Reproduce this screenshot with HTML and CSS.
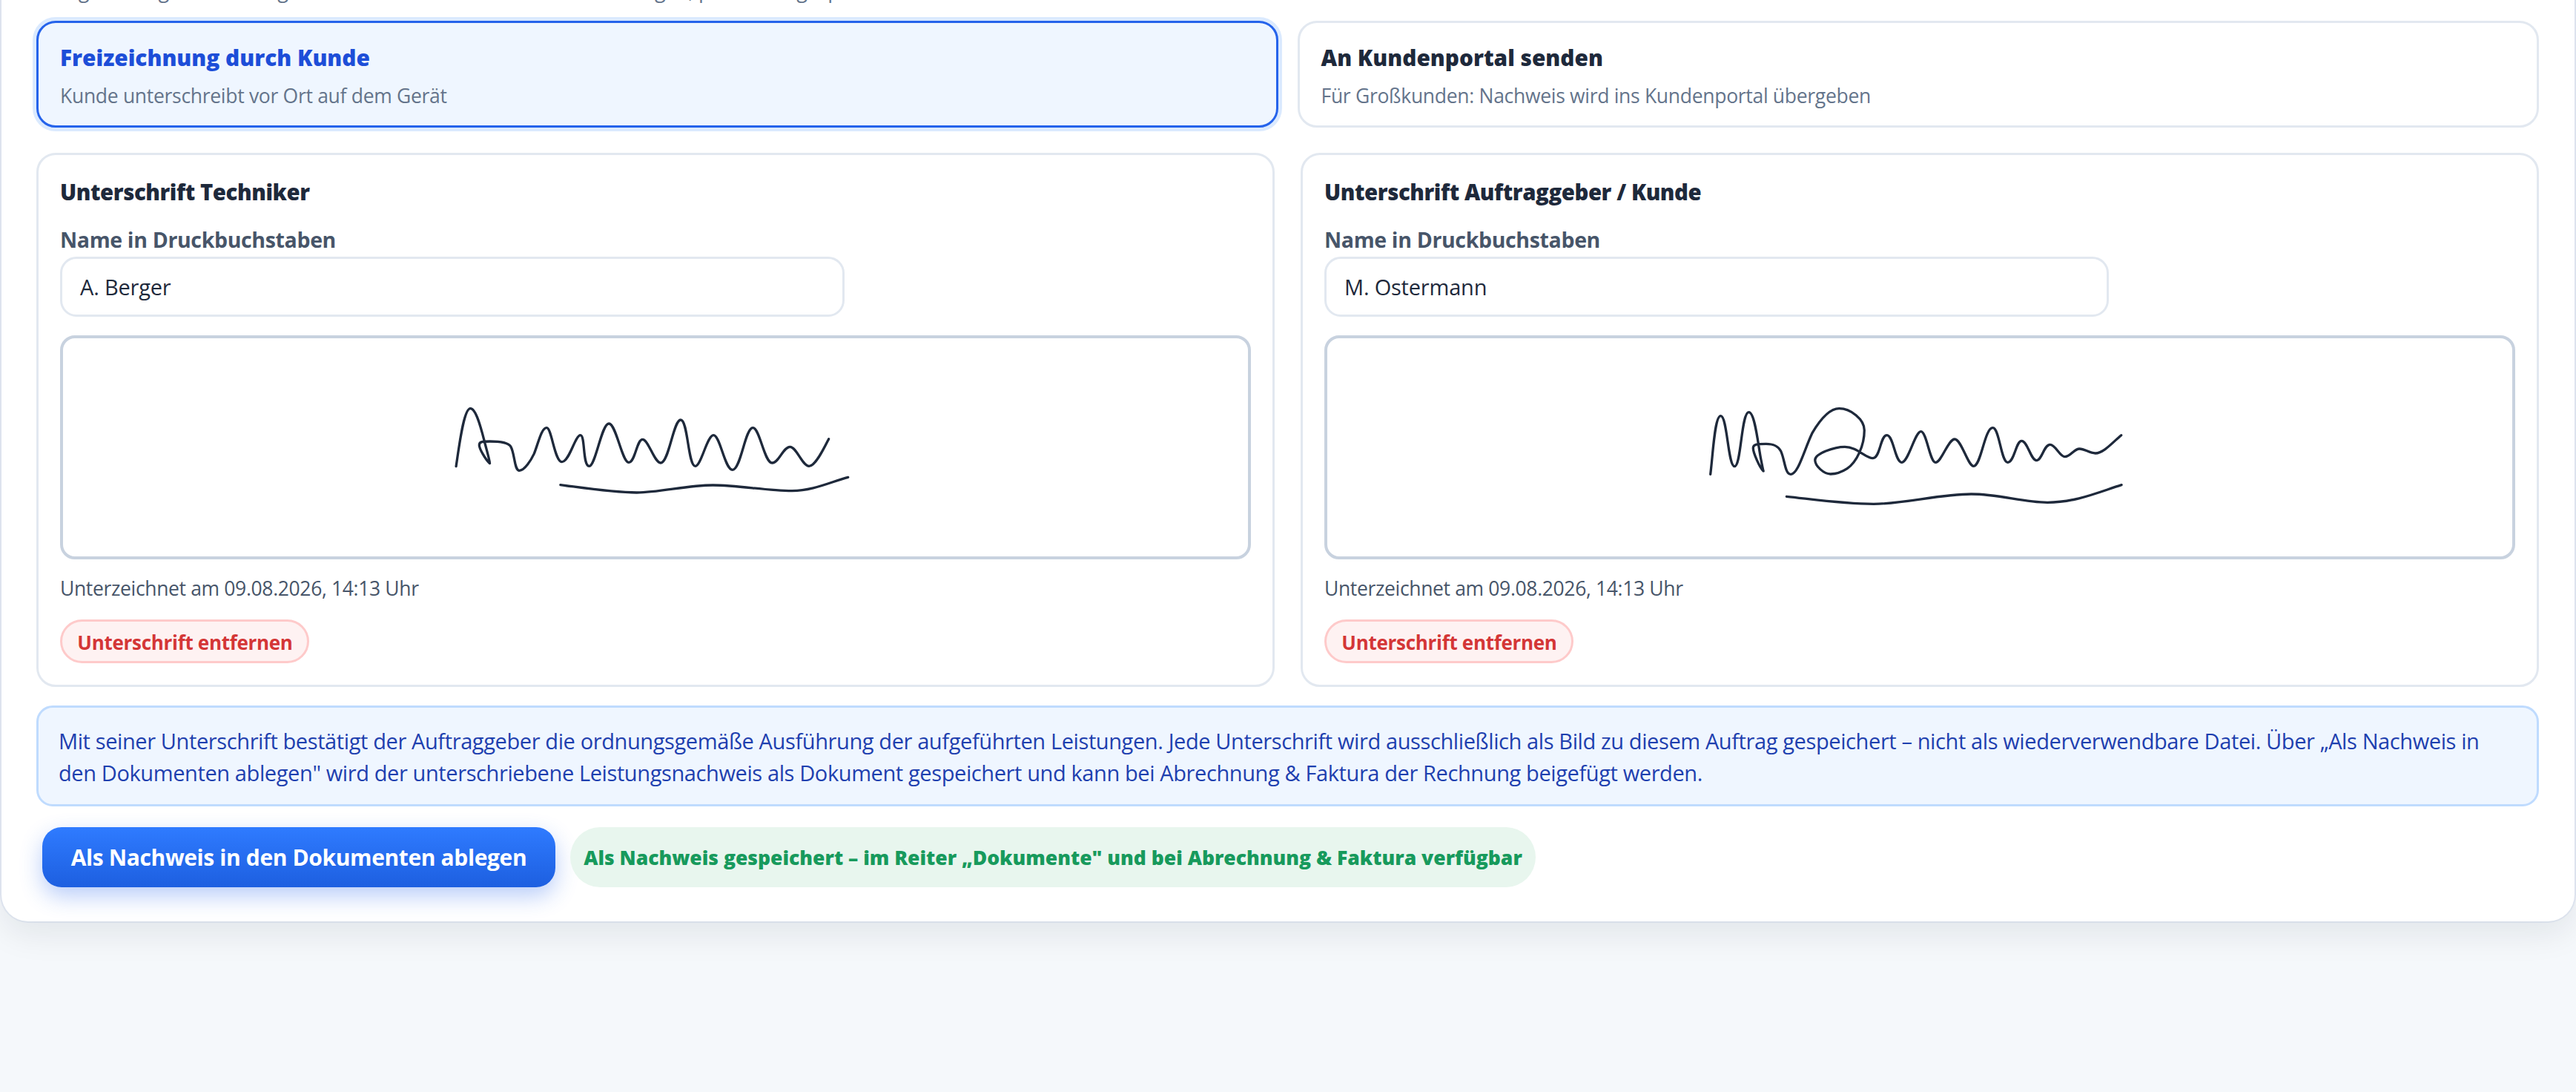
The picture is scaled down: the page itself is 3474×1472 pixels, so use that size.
FILE: index.html
```html
<!DOCTYPE html>
<html lang="de">
<head>
<meta charset="utf-8">
<title>Leistungsnachweis</title>
<link rel="stylesheet" href="styles.css">
</head>
<body>
<main class="panel">
  <p class="intro">Erfolgt die Abgabe vor Ort gemeinsam mit dem Kunden an den Anlagen, prüfen Sie gespeicherte Daten.</p>
  <div class="options">
    <div class="option option-active">
      <div class="option-title">Freizeichnung durch Kunde</div>
      <div class="option-sub">Kunde unterschreibt vor Ort auf dem Gerät</div>
    </div>
    <div class="option">
      <div class="option-title">An Kundenportal senden</div>
      <div class="option-sub">Für Großkunden: Nachweis wird ins Kundenportal übergeben</div>
    </div>
  </div>
  <div class="signatures">
    <section class="sig-card">
      <h3 class="sig-title">Unterschrift Techniker</h3>
      <label class="sig-label">Name in Druckbuchstaben</label>
      <div class="name-input">A. Berger</div>
      <div class="sig-pad">
        <svg class="sig-svg" viewBox="0 0 1598 294" aria-hidden="true">
          <g transform="translate(485 44) scale(0.3954 0.3333)">
            <path class="sig-stroke" d="M114,386 C125,300 140,152 163,152 C185,152 205,260 214,300 C222,335 228,360 229,374 C215,360 193,315 193,300 C193,285 205,285 230,285 C260,285 290,288 300,305 C315,335 312,403 330,403 C348,403 370,360 380,335 C395,290 405,230 423,230 C440,230 450,368 475,368 C500,368 520,260 538,260 C555,260 545,385 568,385 C590,385 610,213 635,213 C660,213 680,370 703,370 C725,370 730,277 750,277 C770,277 790,372 812,372 C840,372 855,198 880,198 C905,198 905,385 930,385 C950,385 970,260 992,260 C1015,260 1030,400 1057,400 C1085,400 1100,230 1126,230 C1150,230 1165,372 1192,372 C1215,372 1230,307 1253,307 C1275,307 1295,385 1318,385 C1340,385 1370,310 1385,275"/>
            <path class="sig-stroke" d="M470,461 C560,475 650,492 730,492 C810,492 900,462 990,462 C1080,462 1170,485 1260,485 C1330,485 1390,450 1451,430"/>
          </g>
        </svg>
      </div>
      <div class="sig-date">Unterzeichnet am 09.08.2026, 14:13 Uhr</div>
      <button class="remove-btn" type="button">Unterschrift entfernen</button>
    </section>
    <section class="sig-card">
      <h3 class="sig-title">Unterschrift Auftraggeber / Kunde</h3>
      <label class="sig-label">Name in Druckbuchstaben</label>
      <div class="name-input">M. Ostermann</div>
      <div class="sig-pad">
        <svg class="sig-svg" viewBox="0 0 1598 294" aria-hidden="true">
          <g transform="translate(460 44) scale(0.4464 0.3333)">
            <path class="sig-stroke" d="M127,418 C135,330 140,182 158,182 C178,182 180,386 200,386 C220,386 220,167 243,167 C262,167 272,310 280,360 C283,380 285,395 287,405 C275,390 256,330 256,312 C256,295 270,295 295,295 C320,295 332,305 340,325 C352,360 352,418 370,418 C392,418 410,320 435,250 C455,205 485,152 516,152 C550,152 592,195 592,240 C592,300 570,368 540,395 C525,408 505,417 490,417 C470,417 443,385 443,360 C443,335 500,307 533,307 C570,307 595,353 618,353 C640,353 640,260 660,260 C680,260 685,370 705,370 C725,370 745,245 763,245 C780,245 790,370 807,370 C825,370 845,276 865,276 C885,276 905,385 922,385 C945,385 955,230 980,230 C1000,230 1005,370 1025,370 C1045,370 1050,283 1067,283 C1085,283 1095,362 1112,362 C1128,362 1135,298 1153,298 C1170,298 1182,347 1198,347 C1215,347 1225,315 1242,315 C1258,315 1272,333 1290,333 C1315,333 1345,285 1368,260"/>
            <path class="sig-stroke" d="M357,508 C430,518 530,538 620,538 C710,538 820,498 915,498 C1000,498 1070,532 1145,532 C1230,532 1300,490 1369,461"/>
          </g>
        </svg>
      </div>
      <div class="sig-date">Unterzeichnet am 09.08.2026, 14:13 Uhr</div>
      <button class="remove-btn" type="button">Unterschrift entfernen</button>
    </section>
  </div>
  <div class="notice">Mit seiner Unterschrift bestätigt der Auftraggeber die ordnungsgemäße Ausführung der aufgeführten Leistungen. Jede Unterschrift wird ausschließlich als Bild zu diesem Auftrag gespeichert – nicht als wiederverwendbare Datei. Über „Als Nachweis in den Dokumenten ablegen" wird der unterschriebene Leistungsnachweis als Dokument gespeichert und kann bei Abrechnung &amp; Faktura der Rechnung beigefügt werden.</div>
  <div class="actions">
    <button class="save-btn" type="button">Als Nachweis in den Dokumenten ablegen</button>
    <div class="saved-pill">Als Nachweis gespeichert – im Reiter „Dokumente" und bei Abrechnung &amp; Faktura verfügbar</div>
  </div>
</main>
</body>
</html>
```
FILE: styles.css
```css
* { box-sizing: border-box; }
html, body { margin: 0; padding: 0; }
html { height: 100%; overflow: hidden; }
body {
  height: 100%;
  overflow: hidden;
  background: #f5f8fb;
  font-family: "Open Sans", "Noto Sans", sans-serif;
  color: #1e293b;
}
.panel {
  margin: -100px 2px 0;
  height: 1342px;
  padding: 70px 48px 0 47px;
  background: #fff;
  border-radius: 0 0 36px 36px;
  box-shadow: 0 18px 44px rgba(15, 23, 42, .08), 0 0 0 2px #e6ecf6;
}
.intro {
  margin: 0;
  height: 44px;
  line-height: 34px;
  font-size: 27px;
  letter-spacing: -.3px;
  color: #64748b;
  white-space: nowrap;
  overflow: hidden;
}
.options {
  display: grid;
  grid-template-columns: 1fr 1fr;
  gap: 26px;
  margin-top: 14px;
}
.option {
  height: 144px;
  padding: 27px 29px 0;
  border: 3px solid #e2e8f0;
  border-radius: 26px;
  background: #fff;
}
.option-active {
  background: #eff6ff;
  border-color: #2563eb;
  box-shadow: 0 0 0 5px #dbeafe;
}
.option-title {
  font-size: 29.8px;
  line-height: 40px;
  font-weight: 800;
  color: #1e293b;
}
.option-active .option-title { color: #1d4ed8; }
.option-sub {
  margin-top: 13px;
  font-size: 26.5px;
  line-height: 36px;
  letter-spacing: -.3px;
  color: #64748b;
}
.signatures {
  display: grid;
  grid-template-columns: 1fr 1fr;
  gap: 35px;
  margin-top: 34px;
}
.sig-card {
  height: 720px;
  padding: 30px 29px 0;
  border: 3px solid #e2e8f0;
  border-radius: 26px;
  background: #fff;
}
.sig-title {
  margin: 0;
  font-size: 29.3px;
  line-height: 40px;
  letter-spacing: -.4px;
  font-weight: 800;
  color: #1e293b;
}
.sig-label {
  display: block;
  margin-top: 24px;
  font-size: 28.5px;
  line-height: 40px;
  letter-spacing: -.35px;
  font-weight: 700;
  color: #475569;
}
.name-input {
  width: 1058px;
  height: 81px;
  margin-top: 3px;
  padding: 0 24px;
  border: 3px solid #e2e8f0;
  border-radius: 22px;
  background: #fff;
  font-size: 29px;
  line-height: 75px;
  letter-spacing: -.2px;
  color: #1e293b;
}
.sig-pad {
  height: 302px;
  margin-top: 25px;
  border: 4.4px solid #c8d2df;
  border-radius: 20px;
  background: #fff;
}
.sig-svg { display: block; width: 100%; height: 100%; }
.sig-stroke {
  fill: none;
  stroke: #1e293b;
  stroke-width: 3.3px;
  stroke-linecap: round;
  stroke-linejoin: round;
  vector-effect: non-scaling-stroke;
}
.sig-date {
  margin-top: 21px;
  font-size: 26.5px;
  line-height: 36px;
  letter-spacing: -.35px;
  color: #475569;
}
.remove-btn {
  display: block;
  width: 336px;
  height: 59px;
  margin-top: 24px;
  padding: 0 0 0 1px;
  border: 3px solid #fecaca;
  border-radius: 30px;
  background: #fef2f2;
  font-family: inherit;
  font-size: 26px;
  line-height: 56px;
  letter-spacing: -.3px;
  font-weight: 700;
  color: #d43636;
}
.notice {
  height: 136px;
  margin-top: 25px;
  padding: 23px 27px 0;
  border: 3px solid #bfdbfe;
  border-radius: 22px;
  background: #eff6ff;
  font-size: 29px;
  line-height: 43px;
  letter-spacing: -.39px;
  color: #1e40af;
}
.actions {
  display: flex;
  align-items: stretch;
  gap: 20px;
  height: 81px;
  margin: 28px 8px 0;
}
.save-btn {
  width: 692px;
  padding: 0;
  border: 0;
  border-radius: 26px;
  background: linear-gradient(180deg, #2f7bff, #1d5fe0);
  box-shadow: 0 12px 30px rgba(37, 99, 235, .32);
  font-family: inherit;
  font-size: 30px;
  letter-spacing: -.38px;
  font-weight: 700;
  color: #fff;
}
.saved-pill {
  width: 1302px;
  display: flex;
  align-items: center;
  justify-content: center;
  border-radius: 41px;
  background: #e8f6ee;
  font-size: 26.5px;
  font-weight: 800;
  color: #179a5c;
}
```
